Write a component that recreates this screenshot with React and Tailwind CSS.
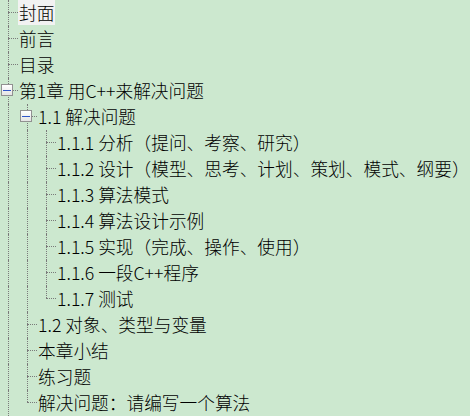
import { useState } from 'react';

// 目录树（第1章展开）
const TREE = [
  { id: 'cover', t: '封面' },
  { id: 'preface', t: '前言' },
  { id: 'toc', t: '目录' },
  {
    id: 'ch1', t: '第1章 用C++来解决问题', children: [
      {
        id: '1.1', t: '1.1 解决问题', children: [
          { id: '1.1.1', t: '1.1.1 分析（提问、考察、研究）' },
          { id: '1.1.2', t: '1.1.2 设计（模型、思考、计划、策划、模式、纲要）' },
          { id: '1.1.3', t: '1.1.3 算法模式' },
          { id: '1.1.4', t: '1.1.4 算法设计示例' },
          { id: '1.1.5', t: '1.1.5 实现（完成、操作、使用）' },
          { id: '1.1.6', t: '1.1.6 一段C++程序' },
          { id: '1.1.7', t: '1.1.7 测试' },
        ],
      },
      { id: '1.2', t: '1.2 对象、类型与变量' },
      { id: 'sum', t: '本章小结' },
      { id: 'ex', t: '练习题' },
      { id: 'prob', t: '解决问题：请编写一个算法' },
    ],
  },
];

function Expander({ open, onClick }) {
  return (
    <button onClick={onClick}
      className="absolute left-[1px] top-[6px] w-[12px] h-[12px] border border-[#919191] bg-gradient-to-b from-white to-[#e4e4e4] flex items-center justify-center p-0">
      <span className="block w-[8px] h-[1px] bg-[#2f55c8]" />
      {!open && <span className="absolute block w-[1px] h-[8px] bg-[#2f55c8]" />}
    </button>
  );
}

function Row({ node, guides, last, open, selected, onToggle, onSelect }) {
  const hasKids = !!node.children;
  return (
    <div className="flex h-[26px]">
      {guides.map((more, i) => (
        <div key={i} className="w-[19px] shrink-0">
          {more && <div className="ml-[8px] h-full border-l border-dotted border-[#7a7a7a]" />}
        </div>
      ))}
      <div className="relative w-[18px] shrink-0 flex flex-col">
        <div className="ml-[8px] h-[12px] border-l border-dotted border-[#7a7a7a]" />
        {last
          ? <div className="ml-[8px] h-[14px] w-[10px] border-t border-dotted border-[#7a7a7a]" />
          : <div className="ml-[8px] h-[14px] w-[10px] border-t border-l border-dotted border-[#7a7a7a]" />}
        {hasKids && <Expander open={open} onClick={() => onToggle(node.id)} />}
      </div>
      <span onClick={() => onSelect(node.id)}
        className={selected
          ? 'h-[25px] px-[1px] leading-[24px] text-[17.7px] font-light text-black whitespace-nowrap bg-[#f2f2f2] cursor-default'
          : 'h-[25px] px-[1px] leading-[24px] text-[17.7px] font-light text-black whitespace-nowrap cursor-default'}>
        {node.t}
      </span>
    </div>
  );
}

export default function App() {
  const [openIds, setOpenIds] = useState({ ch1: true, '1.1': true });
  const [sel, setSel] = useState('cover');

  function toggle(id) {
    setOpenIds(o => ({ ...o, [id]: !o[id] }));
  }

  function renderNodes(nodes, guides, rootLevel) {
    return nodes.map((n, i) => {
      // 根层后面还有章节（在窗口之外），所以根层竖线一直向下
      const last = rootLevel ? false : i === nodes.length - 1;
      const open = !!openIds[n.id];
      return (
        <div key={n.id}>
          <Row node={n} guides={guides} last={last} open={open}
            selected={sel === n.id} onToggle={toggle} onSelect={setSel} />
          {n.children && open && renderNodes(n.children, [...guides, !last], false)}
        </div>
      );
    });
  }

  return (
    <div className="w-[470px] h-[416px] overflow-hidden bg-[#cce8cf] select-none"
      style={{ fontFamily: '"Noto Sans CJK SC", "Noto Sans", sans-serif' }}>
      {renderNodes(TREE, [], true)}
    </div>
  );
}
